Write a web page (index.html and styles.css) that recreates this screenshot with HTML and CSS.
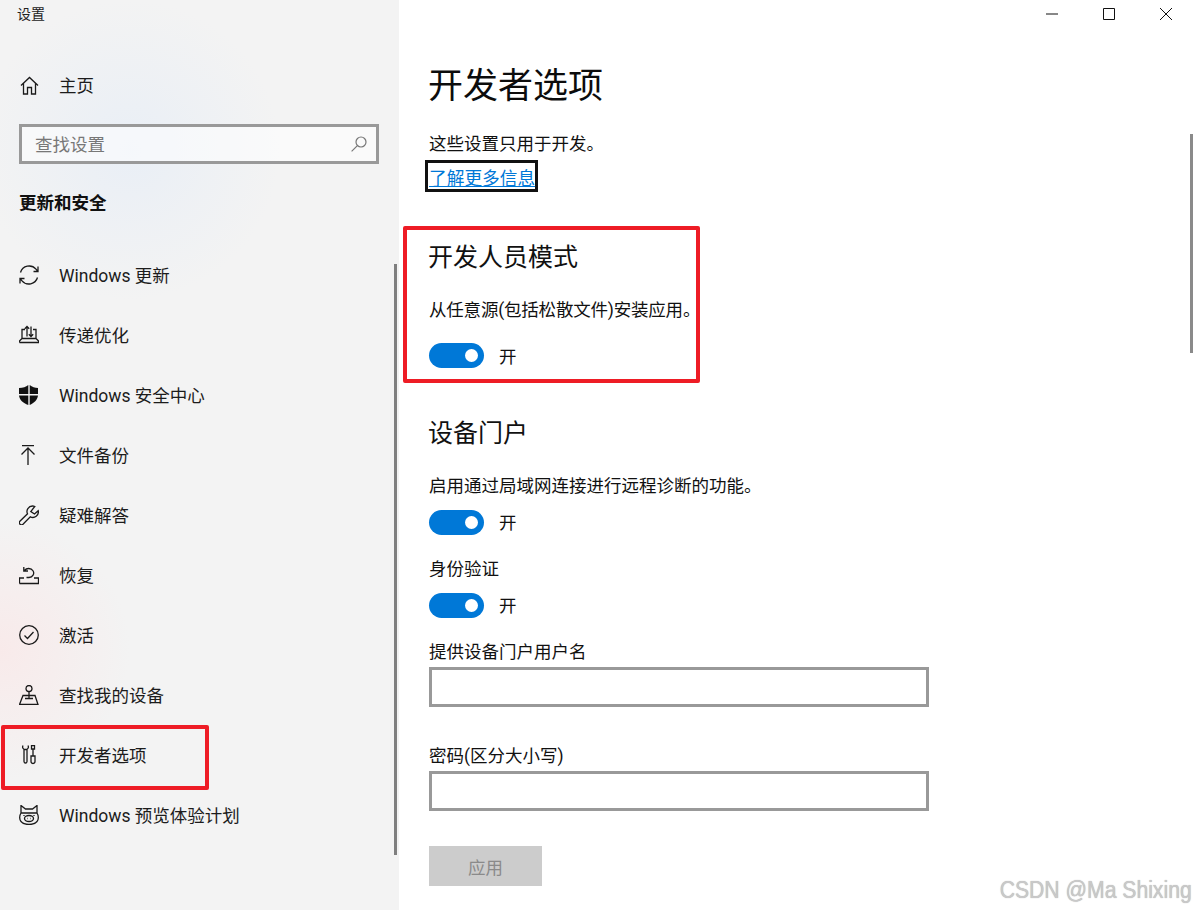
FILE: index.html
```html
<!DOCTYPE html>
<html lang="zh-CN">
<head>
<meta charset="utf-8">
<title>设置</title>
<link rel="stylesheet" href="styles.css">
</head>
<body>
<div class="app">
  <aside class="sidebar">
    <div class="app-title">设置</div>
    <a class="nav-item nav-home">
      <svg class="icon" viewBox="0 0 20 20"><path d="M2 10.500 10.500 2.500 19 10.500M4.500 8.500V19H8.500V12.500H12.500V19H16.500V8.500"/></svg>
      <span>主页</span>
    </a>
    <div class="search">
      <span>查找设置</span>
      <svg class="search-icon" viewBox="0 0 16 16"><circle cx="10" cy="6" r="5"/><path d="M6.400 9.600 .6 15.400"/></svg>
    </div>
    <div class="group-title">更新和安全</div>
    <nav class="nav-list">
      <a class="nav-item">
        <svg class="icon" viewBox="0 0 20 20"><path d="M1.500 7.500A9 9 0 0 1 17 4.200L19 6.500M19 1.500V6.500H14.500M18.500 12.500A9 9 0 0 1 3 15.800L1 13.500M1 18.500V13.500H5.500"/></svg>
        <span>Windows 更新</span>
      </a>
      <a class="nav-item">
        <svg class="icon" viewBox="0 0 20 20"><path d="M.5 17.500H19.500V16L17 13.500V4.500H14M6 4.500H3V13.500L.5 16V17.500M3 13.500H17M8 11.500V1.500M5.800 3.700 8 1.500 10.200 3.700M12 1.500V11.500M9.800 9.300 12 11.500 14.200 9.300"/></svg>
        <span>传递优化</span>
      </a>
      <a class="nav-item">
        <svg class="icon icon-solid" viewBox="0 0 20 20"><path d="M9.300 0C7 2 4 3 0 3V9H9.300ZM10.700 0C13 2 16 3 19 3V9H10.700ZM0 10.500H9.300V20C4 18 .5 15 0 10.500ZM10.700 10.500H19C18.500 15 15 18 10.700 20Z"/></svg>
        <span>Windows 安全中心</span>
      </a>
      <a class="nav-item">
        <svg class="icon" viewBox="0 0 20 20"><path d="M3 .5H15M9 20V3M2.500 9.500 9 3 15.500 9.500"/></svg>
        <span>文件备份</span>
      </a>
      <a class="nav-item">
        <svg class="icon" viewBox="0 0 20 20"><path d="M13.500 1A5.500 5.500 0 0 0 8.500 8.800L.9 16.200A2.200 2.200 0 0 0 4 19.300L11.300 11.800A5.500 5.500 0 0 0 19.200 5.700L15.500 9 11.800 6.500 15.800 1.500A5.500 5.500 0 0 0 13.500 1Z"/></svg>
        <span>疑难解答</span>
      </a>
      <a class="nav-item">
        <svg class="icon" viewBox="0 0 20 20"><path d="M.5 18.500V13H5M15 13H19.500V18.500H.5M5.500 5.500A5 4.500 0 1 1 10 12.500H7.500M4.800 2V6H9"/></svg>
        <span>恢复</span>
      </a>
      <a class="nav-item">
        <svg class="icon" viewBox="0 0 20 20"><circle cx="10" cy="10" r="9.300"/><path d="M5.500 10.500 8.500 13.500 14.500 7"/></svg>
        <span>激活</span>
      </a>
      <a class="nav-item">
        <svg class="icon" viewBox="0 0 20 20"><circle cx="10" cy="3.500" r="3"/><path d="M10 6.500V13M.5 19.500 4 10.500H16L19 19.500ZM6 13.500H14"/></svg>
        <span>查找我的设备</span>
      </a>
      <a class="nav-item">
        <svg class="icon" viewBox="0 0 20 20"><path d="M5 4.500V16.500A1.500 1.500 0 0 0 8 16.500V4.500M4 .5C3 2.500 4 4.500 6.500 4.500S10 2.500 9 .5M12 11H16V16.500A2 2 0 0 1 12 16.500ZM14 11V4M12.500 .5H15.500V4H12.500Z"/></svg>
        <span>开发者选项</span>
      </a>
      <a class="nav-item">
        <svg class="icon" viewBox="0 0 20 20"><path d="M2 .5 6.500 4H13.500L18 .5V8C20 11 19.500 15 18 16.500 16 19 13 19.500 10 19.500S4 19 2 16.500C.5 15 0 11 2 8ZM2 8H18M5.500 13.500A4.500 3 0 0 0 14.500 13.500 4.500 3 0 0 0 5.500 13.500ZM5 11V10M15 11V10M8 13.500H8.500M11.500 13.500H12"/></svg>
        <span>Windows 预览体验计划</span>
      </a>
    </nav>
  </aside>

  <main class="content">
    <div class="window-controls">
      <span class="win-btn"><svg viewBox="0 0 12 12"><path d="M0 6H12"/></svg></span>
      <span class="win-btn"><svg viewBox="0 0 12 12"><path d="M.5 .5H11.500V11.500H.5Z"/></svg></span>
      <span class="win-btn"><svg viewBox="0 0 12 12"><path d="M0 0 12 12M12 0 0 12"/></svg></span>
    </div>
    <h1 class="page-title">开发者选项</h1>
    <p class="text intro">这些设置只用于开发。</p>
    <a class="more-link"><span>了解更多信息</span></a>

    <h2 class="section-title section-first">开发人员模式</h2>
    <p class="text section-desc desc-tight">从任意源(包括松散文件)安装应用。</p>
    <div class="toggle-row toggle-wide"><span class="toggle"></span><span class="toggle-label">开</span></div>

    <h2 class="section-title section-next">设备门户</h2>
    <p class="text section-desc">启用通过局域网连接进行远程诊断的功能。</p>
    <div class="toggle-row"><span class="toggle"></span><span class="toggle-label">开</span></div>
    <p class="text field-label">身份验证</p>
    <div class="toggle-row"><span class="toggle"></span><span class="toggle-label">开</span></div>
    <p class="text field-label">提供设备门户用户名</p>
    <div class="input"></div>
    <p class="text field-label field-gap">密码(区分大小写)</p>
    <div class="input"></div>
    <div class="apply">应用</div>
  </main>

  <div class="scroll scroll-side"></div>
  <div class="scroll scroll-main"></div>
  <div class="mark mark-nav"></div>
  <div class="mark mark-dev"></div>
  <div class="watermark">CSDN @Ma Shixing</div>
</div>
</body>
</html>
```
FILE: styles.css
```css
* { box-sizing: border-box; }
html, body { margin: 0; padding: 0; }
body {
  width: 1195px;
  height: 910px;
  overflow: hidden;
  background: #fff;
  color: #111;
  font-family: Roboto, "Noto Sans CJK SC", sans-serif;
  font-size: 17.5px;
}
.app { position: relative; display: flex; width: 1195px; height: 910px; }

.sidebar {
  width: 399px;
  flex: none;
  padding-left: 19px;
  background:
    radial-gradient(circle at 130px 150px, rgba(225, 235, 248, .55), transparent 150px),
    radial-gradient(circle at 0 650px, rgba(252, 228, 228, .6), transparent 130px),
    #f3f3f3;
}
.app-title { margin: 3px 0 0 -2px; height: 22px; font-size: 14px; line-height: 22px; color: #222; }
.nav-item { display: flex; align-items: center; height: 60px; color: #1c1c1c; }
.nav-item span { padding-bottom: 2px; }
.nav-home { margin-top: 30px; }
.icon {
  width: 20px; height: 20px; margin-right: 20px; flex: none;
  fill: none; stroke: #1a1a1a; stroke-width: 1.300;
}
.icon-solid { fill: #111; stroke: none; }
.search {
  display: flex; align-items: center; justify-content: space-between;
  width: 360px; height: 40px; margin-top: 9px; padding: 0 9px 2px 13px;
  border: 3px solid #999;
  background: rgba(255, 255, 255, .55);
  color: #777;
}
.search-icon { width: 16px; height: 16px; margin-top: 2px; fill: none; stroke: #777; stroke-width: 1.200; }
.group-title { margin-top: 25px; height: 26px; line-height: 28px; font-weight: 700; color: #111; }
.nav-list { margin-top: 30px; }

.content { flex: 1; padding-left: 30px; }
.window-controls { display: flex; justify-content: flex-end; height: 28px; padding-right: 1px; }
.win-btn { display: flex; align-items: center; justify-content: center; width: 57px; height: 28px; }
.win-btn svg { width: 12px; height: 12px; fill: none; stroke: #111; stroke-width: 1; }
.page-title { margin: 32px 0 0 -1px; height: 50px; font-size: 35px; line-height: 54px; font-weight: 400; color: #0c0c0c; }
.text { margin: 0; height: 26px; line-height: 28px; }
.intro { margin-top: 20px; }
.more-link {
  display: flex; align-items: center; width: 113px; height: 32px; margin: 4px 0 0 -4px; padding: 2px 0 0 1px;
  border: 3px solid #111;
  color: #0078d7;
  font-size: 17.700px;
}
.more-link span { white-space: nowrap; text-decoration: underline; text-underline-offset: 1px; }
.section-title { margin: 0 0 0 -1px; height: 36px; font-size: 25px; line-height: 40px; font-weight: 400; color: #111; }
.section-first { margin-top: 46px; }
.section-next { margin-top: 46px; }
.section-desc { margin-top: 22px; }
.desc-tight { letter-spacing: -.2px; }
.toggle-row { display: flex; align-items: center; gap: 15px; height: 25px; margin-top: 12px; }
.toggle-label { padding-bottom: 2px; }
.toggle-wide { margin-top: 21px; }
.toggle-wide .toggle-label { padding-bottom: 0; }
.toggle { position: relative; width: 55px; height: 25px; border-radius: 13px; background: #0078d7; }
.toggle::after {
  content: ""; position: absolute; top: 6px; right: 6px;
  width: 13px; height: 13px; border-radius: 50%; background: #fff;
}
.field-label { margin-top: 20px; }
.field-gap { margin-top: 35px; }
.input { width: 500px; height: 40px; margin-top: 3px; border: 3px solid #999; background: #fff; }
.apply {
  display: flex; align-items: center; justify-content: center;
  width: 113px; height: 40px; margin-top: 35px;
  background: #ccc; color: #8a8a8a;
}

.scroll { position: absolute; }
.scroll-side { left: 394px; top: 264px; width: 3px; height: 591px; background: #7f7f7f; }
.scroll-main { left: 1190px; top: 134px; width: 3px; height: 219px; background: #8a8a8a; }
.mark { position: absolute; border: 4px solid #ee1c25; border-radius: 2px; }
.mark-nav { left: 1px; top: 725px; width: 208px; height: 65px; }
.mark-dev { left: 403px; top: 226px; width: 297px; height: 157px; }
.watermark {
  position: absolute; right: 3px; top: 876px;
  font-family: "Liberation Sans", sans-serif; font-size: 23px; line-height: 28px;
  color: #c9c9c9;
  text-shadow: 0 0 1px #aaa;
  transform: scaleX(.92);
  transform-origin: right center;
}
```
